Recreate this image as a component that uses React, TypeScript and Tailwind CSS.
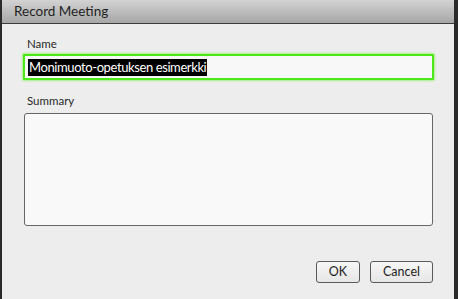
import React from "react";

export default function App() {
  const font = { fontFamily: 'Lato, "Open Sans", "DejaVu Sans", sans-serif' };
  return (
    <div className="w-[458px] h-[299px] flex bg-[#2a2a2a] overflow-hidden" style={font}>
      <div className="ml-[2px] w-[452px] h-full flex flex-col bg-[#ededed]">
        <div className="h-[24px] flex items-center pl-[12px] bg-gradient-to-b from-[#d3d3d3] to-[#a6a6a6] border-b border-[#3c3c3c]">
          <span className="text-[13.5px] text-[#1e1e1e] leading-none pt-[1px]">Record Meeting</span>
        </div>
        <div className="flex flex-col pl-[21px] pr-[20px]">
          <label className="mt-[13px] text-[11.5px] leading-[14px] text-[#2a2a2a] pl-[4px]">Name</label>
          <div className="mt-[3px] h-[26px] rounded-[1px] border-2 border-[#4fe61a] shadow-[0_0_2px_1px_#a8f08a] bg-[#f8f8f8] flex items-center pl-[3px]">
            <span className="bg-black text-white text-[13px] tracking-[-0.4px] leading-[17px] px-[1px]">Monimuoto-opetuksen esimerkki</span>
          </div>
          <label className="mt-[14px] text-[11.5px] leading-[14px] text-[#2a2a2a] pl-[4px]">Summary</label>
          <div className="mt-[5px] ml-[1px] mr-[1px] h-[113px] rounded-[3px] border border-[#666] bg-[#f9f9f9]" />
          <div className="mt-[35px] flex justify-end gap-[10px] mr-[1px]">
            <button className="w-[44px] h-[22px] rounded-[3px] border border-[#5a5a5a] bg-gradient-to-b from-[#f7f7f7] to-[#e6e6e6] text-[12.5px] text-[#222]">OK</button>
            <button className="w-[63px] h-[22px] rounded-[3px] border border-[#5a5a5a] bg-gradient-to-b from-[#f7f7f7] to-[#e6e6e6] text-[12.5px] text-[#222]">Cancel</button>
          </div>
        </div>
      </div>
    </div>
  );
}
